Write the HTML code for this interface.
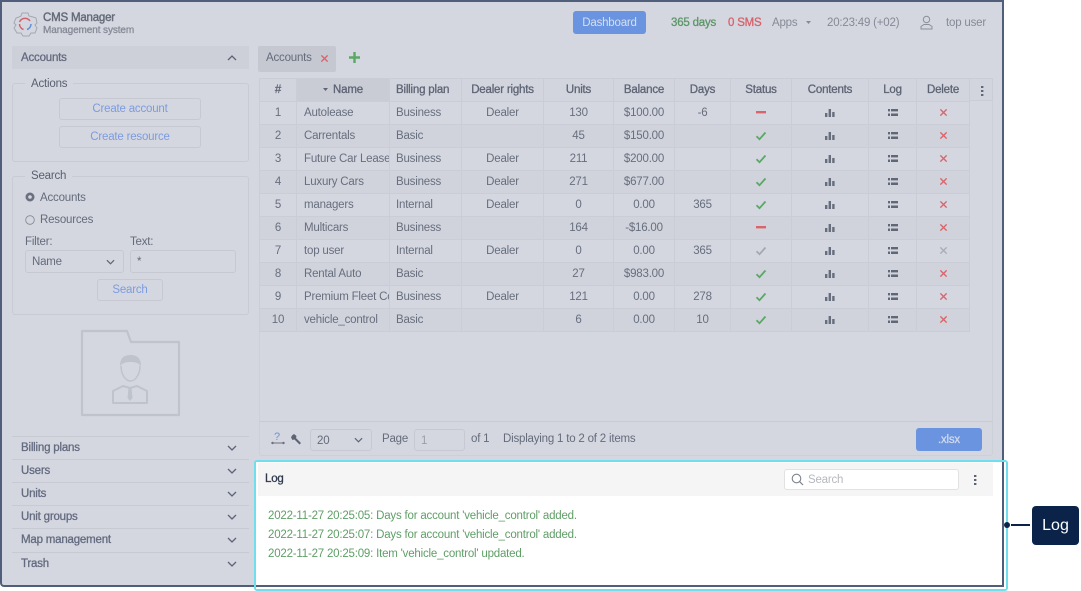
<!DOCTYPE html>
<html><head><meta charset="utf-8">
<style>
*{box-sizing:border-box}
html,body{margin:0;padding:0;width:1081px;height:591px;overflow:hidden;background:#fff}
body{font-family:"Liberation Sans",Arial,sans-serif;font-size:11.5px;letter-spacing:-.2px;color:#646b7b;position:relative}
.a{position:absolute;white-space:nowrap}
.m{-webkit-text-stroke:.3px currentColor}
#frame{left:0;top:0;width:1004px;height:587px;background:#d4d7df;border:2px solid #505e7c;border-radius:0 0 4px 4px}
.acc{left:12px;width:237px;height:23px;line-height:23px;padding-left:9px;color:#646b80;border-top:1px solid #c7cad3;-webkit-text-stroke:.3px currentColor}
.chev{position:absolute;left:227px;width:10px;height:6px}
.fs{border:1px solid #c8cbd3;border-radius:3px}
.lg{background:#d4d7df;padding:0 6px;color:#585f70}
.btn{border:1px solid #c6c9d2;border-radius:3px;color:#7c9be0;text-align:center;background:#d4d7df}
.inp{border:1px solid #c6c9d2;border-radius:3px;line-height:22px;padding-left:6px}
table{position:absolute;left:259px;top:78px;border-collapse:collapse;table-layout:fixed;width:710px;font-size:11.5px}
td,th{height:23px;padding:0;border:1px solid #caCDd5;text-align:center;overflow:hidden;white-space:nowrap;color:#676e7e;font-weight:normal}
th{font-weight:normal;-webkit-text-stroke:.3px currentColor;color:#5d6475;background:#d2d5dd}
td.l,th.l{text-align:left;padding-left:6px}
td.n{text-align:left;padding-left:7px}
tr:nth-child(odd) td{background:#d0d3db}
svg{display:inline-block;vertical-align:middle}
</style></head><body>
<svg width="0" height="0" style="position:absolute">
<symbol id="ok" viewBox="0 0 12 10"><path d="M1.500 5.200 4.500 8.200 10.500 1.500" fill="none" stroke="#5aa864" stroke-width="1.800"/></symbol>
<symbol id="okg" viewBox="0 0 12 10"><path d="M1.500 5.200 4.500 8.200 10.500 1.500" fill="none" stroke="#a4a8b0" stroke-width="1.800"/></symbol>
<symbol id="x" viewBox="0 0 10 10"><path d="M1.500 1.500 8.500 8.500M8.500 1.500 1.500 8.500" fill="none" stroke="#d9646c" stroke-width="1.500"/></symbol>
<symbol id="xg" viewBox="0 0 10 10"><path d="M1.500 1.500 8.500 8.500M8.500 1.500 1.500 8.500" fill="none" stroke="#a8acb4" stroke-width="1.500"/></symbol>
<symbol id="bar" viewBox="0 0 10 8"><path d="M0 4h2.400v4H0zM3.600 0H6v8H3.600zM7.200 3h2.400v5H7.200z" fill="#666d7d"/></symbol>
<symbol id="list" viewBox="0 0 10 7"><path d="M0 0h2v2.400H0zM3 0h7v2.400H3zM0 4.500h2V7H0zM3 4.500h7V7H3z" fill="#606777"/></symbol>
<symbol id="dn" viewBox="0 0 10 6"><path d="M1 1 5 5 9 1" fill="none" stroke="#5d6475" stroke-width="1.300"/></symbol>
</svg>
<div class="a" id="frame"></div>

<svg class="a" style="left:12px;top:11px" width="26" height="27" viewBox="0 0 26 27"><path d="M10 2h6l1 3 4 1 3 1 1 5-2 2 2 3-2 5-4 0-2 3h-6l-2-3-4 0-3-5 2-3-2-2 2-5 3-1 2-1z" fill="none" stroke="#a4a7b0" stroke-width="1"/><path d="M7.500 11a6 6 0 0 1 10.500-1" fill="none" stroke="#cf6470" stroke-width="1.500"/><path d="M19 13a6 6 0 0 1-4 5.500" fill="none" stroke="#5f8fd8" stroke-width="1.500"/><path d="M7.500 13a6 6 0 0 0 4 5.500" fill="none" stroke="#cf6470" stroke-width="1.500"/></svg>
<div class="a m" style="left:43px;top:12px;color:#646a78;font-size:11.500px;-webkit-text-stroke-width:.4px">CMS Manager</div>
<div class="a m" style="left:43px;top:25px;color:#858a96;font-size:10px;letter-spacing:-.1px">Management system</div>

<div class="a" style="left:573px;top:11px;width:73px;height:23px;background:#6a94e0;border-radius:3px;color:#d6dff0;text-align:center;line-height:25px">Dashboard</div>
<div class="a m" style="left:671px;top:17px;color:#5c9668">365 days</div>
<div class="a m" style="left:728px;top:17px;color:#d9606a">0 SMS</div>
<div class="a" style="left:772px;top:17px;color:#858a96">Apps</div>
<svg class="a" style="left:806px;top:21px" width="5" height="4"><path d="M0 0h5L2.500 3z" fill="#858a96"/></svg>
<div class="a" style="left:827px;top:17px;color:#858a96">20:23:49 (+02)</div>
<svg class="a" style="left:920px;top:15px" width="13" height="15" viewBox="0 0 13 15"><circle cx="6.500" cy="4.500" r="3.200" fill="none" stroke="#8a8f9a"/><path d="M1 14v-2.500l3-2h5l3 2V14z" fill="none" stroke="#8a8f9a"/></svg>
<div class="a" style="left:946px;top:17px;color:#858a96">top user</div>

<div class="a m" style="left:12px;top:46px;width:237px;height:23px;background:#cdd0d9;line-height:25px;padding-left:9px;color:#646b80">Accounts</div>
<svg class="a" style="left:227px;top:55px" width="10" height="6"><use href="#dn" transform="translate(0,6) scale(1,-1)"/></svg>

<div class="a fs" style="left:12px;top:83px;width:237px;height:79px"></div>
<div class="a lg" style="left:25px;top:76px;line-height:16px;height:14px">Actions</div>
<div class="a btn" style="left:59px;top:98px;width:142px;height:22px;line-height:21px">Create account</div>
<div class="a btn" style="left:59px;top:126px;width:142px;height:22px;line-height:21px">Create resource</div>

<div class="a fs" style="left:12px;top:176px;width:237px;height:139px"></div>
<div class="a lg" style="left:25px;top:168px;line-height:16px;height:14px">Search</div>
<svg class="a" style="left:25px;top:192px" width="10" height="10"><circle cx="5" cy="5" r="4.500" fill="#6a7080"/><circle cx="5" cy="5" r="1.800" fill="#d4d7df"/></svg>
<div class="a" style="left:40px;top:192px">Accounts</div>
<svg class="a" style="left:25px;top:215px" width="10" height="10"><circle cx="5" cy="5" r="4.300" fill="none" stroke="#80858f" stroke-width=".8"/></svg>
<div class="a" style="left:40px;top:214px">Resources</div>
<div class="a" style="left:25px;top:236px">Filter:</div>
<div class="a" style="left:130px;top:236px">Text:</div>
<div class="a inp" style="left:25px;top:250px;width:99px;height:23px">Name</div>
<svg class="a" style="left:106px;top:259px" width="9" height="6"><use href="#dn"/></svg>
<div class="a inp" style="left:130px;top:250px;width:106px;height:23px">*</div>
<div class="a btn" style="left:97px;top:279px;width:66px;height:22px;line-height:21px">Search</div>

<svg class="a" style="left:80px;top:329px" width="101" height="88" viewBox="0 0 101 88"><path d="M2 2h45l4 11H99v73H2z" fill="none" stroke="#bfc3cc" stroke-width="2.200" stroke-linejoin="round"/><path d="M40 37c0-7 3-11 10.500-11S61 30 61 37c-3-3-5-4-10.500-4S43 34 40 37z" fill="#bfc3cc"/><path d="M41 37c0 9 5 15 9.500 15S60 46 60 37" fill="none" stroke="#bfc3cc" stroke-width="1.500"/><path d="M33 74V62l10-5 7 2 7-2 10 5v12z" fill="none" stroke="#bfc3cc" stroke-width="2" stroke-linejoin="round"/><path d="M48.500 59h3l1 10-2.500 3-2.500-3z" fill="#bfc3cc"/></svg>

<div class="a acc" style="top:436px">Billing plans</div>
<div class="a acc" style="top:459px">Users</div>
<div class="a acc" style="top:482px">Units</div>
<div class="a acc" style="top:505px">Unit groups</div>
<div class="a acc" style="top:528px;height:24px">Map management</div>
<div class="a acc" style="top:552px">Trash</div>
<svg class="chev" style="top:445px"><use href="#dn"/></svg>
<svg class="chev" style="top:468px"><use href="#dn"/></svg>
<svg class="chev" style="top:491px"><use href="#dn"/></svg>
<svg class="chev" style="top:514px"><use href="#dn"/></svg>
<svg class="chev" style="top:537px"><use href="#dn"/></svg>
<svg class="chev" style="top:561px"><use href="#dn"/></svg>

<div class="a" style="left:258px;top:46px;width:78px;height:26px;background:#c5c8d1;border-radius:2px;line-height:25px;padding-left:8px;color:#646b7b">Accounts</div>
<svg class="a" style="left:320px;top:54px" width="9" height="9"><use href="#x"/></svg>
<svg class="a" style="left:349px;top:52px" width="11" height="11"><path d="M5.500 0v11M0 5.500h11" stroke="#5aa864" stroke-width="2.400"/></svg>

<div class="a" style="left:259px;top:78px;width:734px;height:378px;border:1px solid #ccd0d8;border-radius:3px"></div>
<div class="a" style="left:969px;top:78px;width:24px;height:23px;background:#d2d5dd;border:1px solid #caCDd5"></div>
<svg class="a" style="left:981px;top:86px" width="3" height="10"><path d="M0 0h2.400v2H0zM0 4h2.400v2H0zM0 8h2.400v2H0z" fill="#606777"/></svg>

<table>
<colgroup><col style="width:37px"><col style="width:93px"><col style="width:72px"><col style="width:82px"><col style="width:70px"><col style="width:61px"><col style="width:56px"><col style="width:61px"><col style="width:77px"><col style="width:48px"><col style="width:53px"></colgroup>
<tr><th>#</th><th style="background:#c9ccd5"><svg width="5" height="4" style="margin-right:5px"><path d="M0 0h5L2.500 3z" fill="#5d6475"/></svg>Name</th><th class="l">Billing plan</th><th>Dealer rights</th><th>Units</th><th>Balance</th><th>Days</th><th>Status</th><th>Contents</th><th>Log</th><th>Delete</th></tr>
<tr><td>1</td><td class="n">Autolease</td><td class="l">Business</td><td>Dealer</td><td>130</td><td>$100.00</td><td>-6</td><td><svg width="10" height="3"><rect width="10" height="2.400" fill="#d9646c"/></svg></td><td><svg width="10" height="8"><use href="#bar"/></svg></td><td><svg width="10" height="7"><use href="#list"/></svg></td><td><svg width="9" height="9"><use href="#x"/></svg></td></tr>
<tr><td>2</td><td class="n">Carrentals</td><td class="l">Basic</td><td></td><td>45</td><td>$150.00</td><td></td><td><svg width="12" height="10"><use href="#ok"/></svg></td><td><svg width="10" height="8"><use href="#bar"/></svg></td><td><svg width="10" height="7"><use href="#list"/></svg></td><td><svg width="9" height="9"><use href="#x"/></svg></td></tr>
<tr><td>3</td><td class="n">Future Car Lease</td><td class="l">Business</td><td>Dealer</td><td>211</td><td>$200.00</td><td></td><td><svg width="12" height="10"><use href="#ok"/></svg></td><td><svg width="10" height="8"><use href="#bar"/></svg></td><td><svg width="10" height="7"><use href="#list"/></svg></td><td><svg width="9" height="9"><use href="#x"/></svg></td></tr>
<tr><td>4</td><td class="n">Luxury Cars</td><td class="l">Business</td><td>Dealer</td><td>271</td><td>$677.00</td><td></td><td><svg width="12" height="10"><use href="#ok"/></svg></td><td><svg width="10" height="8"><use href="#bar"/></svg></td><td><svg width="10" height="7"><use href="#list"/></svg></td><td><svg width="9" height="9"><use href="#x"/></svg></td></tr>
<tr><td>5</td><td class="n">managers</td><td class="l">Internal</td><td>Dealer</td><td>0</td><td>0.00</td><td>365</td><td><svg width="12" height="10"><use href="#ok"/></svg></td><td><svg width="10" height="8"><use href="#bar"/></svg></td><td><svg width="10" height="7"><use href="#list"/></svg></td><td><svg width="9" height="9"><use href="#x"/></svg></td></tr>
<tr><td>6</td><td class="n">Multicars</td><td class="l">Business</td><td></td><td>164</td><td>-$16.00</td><td></td><td><svg width="10" height="3"><rect width="10" height="2.400" fill="#d9646c"/></svg></td><td><svg width="10" height="8"><use href="#bar"/></svg></td><td><svg width="10" height="7"><use href="#list"/></svg></td><td><svg width="9" height="9"><use href="#x"/></svg></td></tr>
<tr><td>7</td><td class="n">top user</td><td class="l">Internal</td><td>Dealer</td><td>0</td><td>0.00</td><td>365</td><td><svg width="12" height="10"><use href="#okg"/></svg></td><td><svg width="10" height="8"><use href="#bar"/></svg></td><td><svg width="10" height="7"><use href="#list"/></svg></td><td><svg width="9" height="9"><use href="#xg"/></svg></td></tr>
<tr><td>8</td><td class="n">Rental Auto</td><td class="l">Basic</td><td></td><td>27</td><td>$983.00</td><td></td><td><svg width="12" height="10"><use href="#ok"/></svg></td><td><svg width="10" height="8"><use href="#bar"/></svg></td><td><svg width="10" height="7"><use href="#list"/></svg></td><td><svg width="9" height="9"><use href="#x"/></svg></td></tr>
<tr><td>9</td><td class="n">Premium Fleet Co</td><td class="l">Business</td><td>Dealer</td><td>121</td><td>0.00</td><td>278</td><td><svg width="12" height="10"><use href="#ok"/></svg></td><td><svg width="10" height="8"><use href="#bar"/></svg></td><td><svg width="10" height="7"><use href="#list"/></svg></td><td><svg width="9" height="9"><use href="#x"/></svg></td></tr>
<tr><td>10</td><td class="n">vehicle_control</td><td class="l">Basic</td><td></td><td>6</td><td>0.00</td><td>10</td><td><svg width="12" height="10"><use href="#ok"/></svg></td><td><svg width="10" height="8"><use href="#bar"/></svg></td><td><svg width="10" height="7"><use href="#list"/></svg></td><td><svg width="9" height="9"><use href="#x"/></svg></td></tr>
</table>

<div class="a" style="left:259px;top:421px;width:734px;height:1px;background:#c8cbd4"></div>
<svg class="a" style="left:271px;top:433px" width="14" height="12" viewBox="0 0 14 12"><path d="M1 10h12" stroke="#6a7080"/><circle cx="1.500" cy="10" r="1.200" fill="#6a7080"/><circle cx="12.500" cy="10" r="1.200" fill="#6a7080"/></svg>
<div class="a" style="left:274px;top:431px;font-size:11px;color:#6f93d6">?</div>
<svg class="a" style="left:291px;top:434px" width="11" height="11" viewBox="0 0 11 11"><path d="M1 1.500 3 0l2.500 2-.5 2 5 5-1.500 1.500-5-5-2 .5L0 3.500z" fill="#5d6475"/></svg>
<div class="a inp" style="left:310px;top:429px;width:62px;height:22px;padding-left:6px">20</div>
<svg class="a" style="left:354px;top:437px" width="9" height="6"><use href="#dn"/></svg>
<div class="a" style="left:382px;top:433px">Page</div>
<div class="a inp" style="left:414px;top:429px;width:51px;height:22px;color:#9a9fa9">1</div>
<div class="a" style="left:471px;top:433px">of 1</div>
<div class="a" style="left:503px;top:433px">Displaying 1 to 2 of 2 items</div>
<div class="a m" style="left:916px;top:428px;width:66px;height:23px;background:#6a94e0;border-radius:3px;color:#d0d8ea;text-align:center;line-height:25px">.xlsx</div>

<div class="a" style="left:254px;top:460px;width:754px;height:131px;border:2px solid #6fdfee;border-radius:3px"></div>
<div class="a" style="left:256px;top:462px;width:750px;height:127px;background:#fff"></div>
<div class="a" style="left:1002px;top:462px;width:2px;height:125px;background:#505e7c"></div>
<div class="a" style="left:256px;top:585px;width:748px;height:2px;background:#505e7c"></div>
<div class="a" style="left:258px;top:463px;width:735px;height:33px;background:#f5f5f5"></div>
<div class="a m" style="left:265px;top:473px;color:#2f3a4e">Log</div>
<div class="a" style="left:784px;top:469px;width:175px;height:21px;background:#fff;border:1px solid #e2e2e2;border-radius:3px;line-height:20px;padding-left:23px;color:#b5b8be">Search</div>
<svg class="a" style="left:791px;top:473px" width="13" height="13" viewBox="0 0 13 13"><circle cx="5.500" cy="5.500" r="4.300" fill="none" stroke="#7d828c" stroke-width="1.100"/><path d="M8.700 8.700 12 12" stroke="#7d828c" stroke-width="1.200"/></svg>
<svg class="a" style="left:974px;top:475px" width="3" height="10"><path d="M0 0h2.400v2H0zM0 4h2.400v2H0zM0 8h2.400v2H0z" fill="#5a6274"/></svg>
<div class="a" style="left:268px;top:510px;color:#5f9e66">2022-11-27 20:25:05: Days for account 'vehicle_control' added.</div>
<div class="a" style="left:268px;top:529px;color:#5f9e66">2022-11-27 20:25:07: Days for account 'vehicle_control' added.</div>
<div class="a" style="left:268px;top:548px;color:#5f9e66">2022-11-27 20:25:09: Item 'vehicle_control' updated.</div>

<div class="a" style="left:1004px;top:522px;width:6px;height:6px;border-radius:50%;background:#0b2349"></div>
<div class="a" style="left:1011px;top:524px;width:19px;height:2px;background:#0b2349"></div>
<div class="a" style="left:1032px;top:506px;width:47px;height:39px;background:#0b2349;border-radius:4px;color:#fff;font-size:16px;letter-spacing:0;line-height:39px;text-align:center">Log</div>
</body></html>
